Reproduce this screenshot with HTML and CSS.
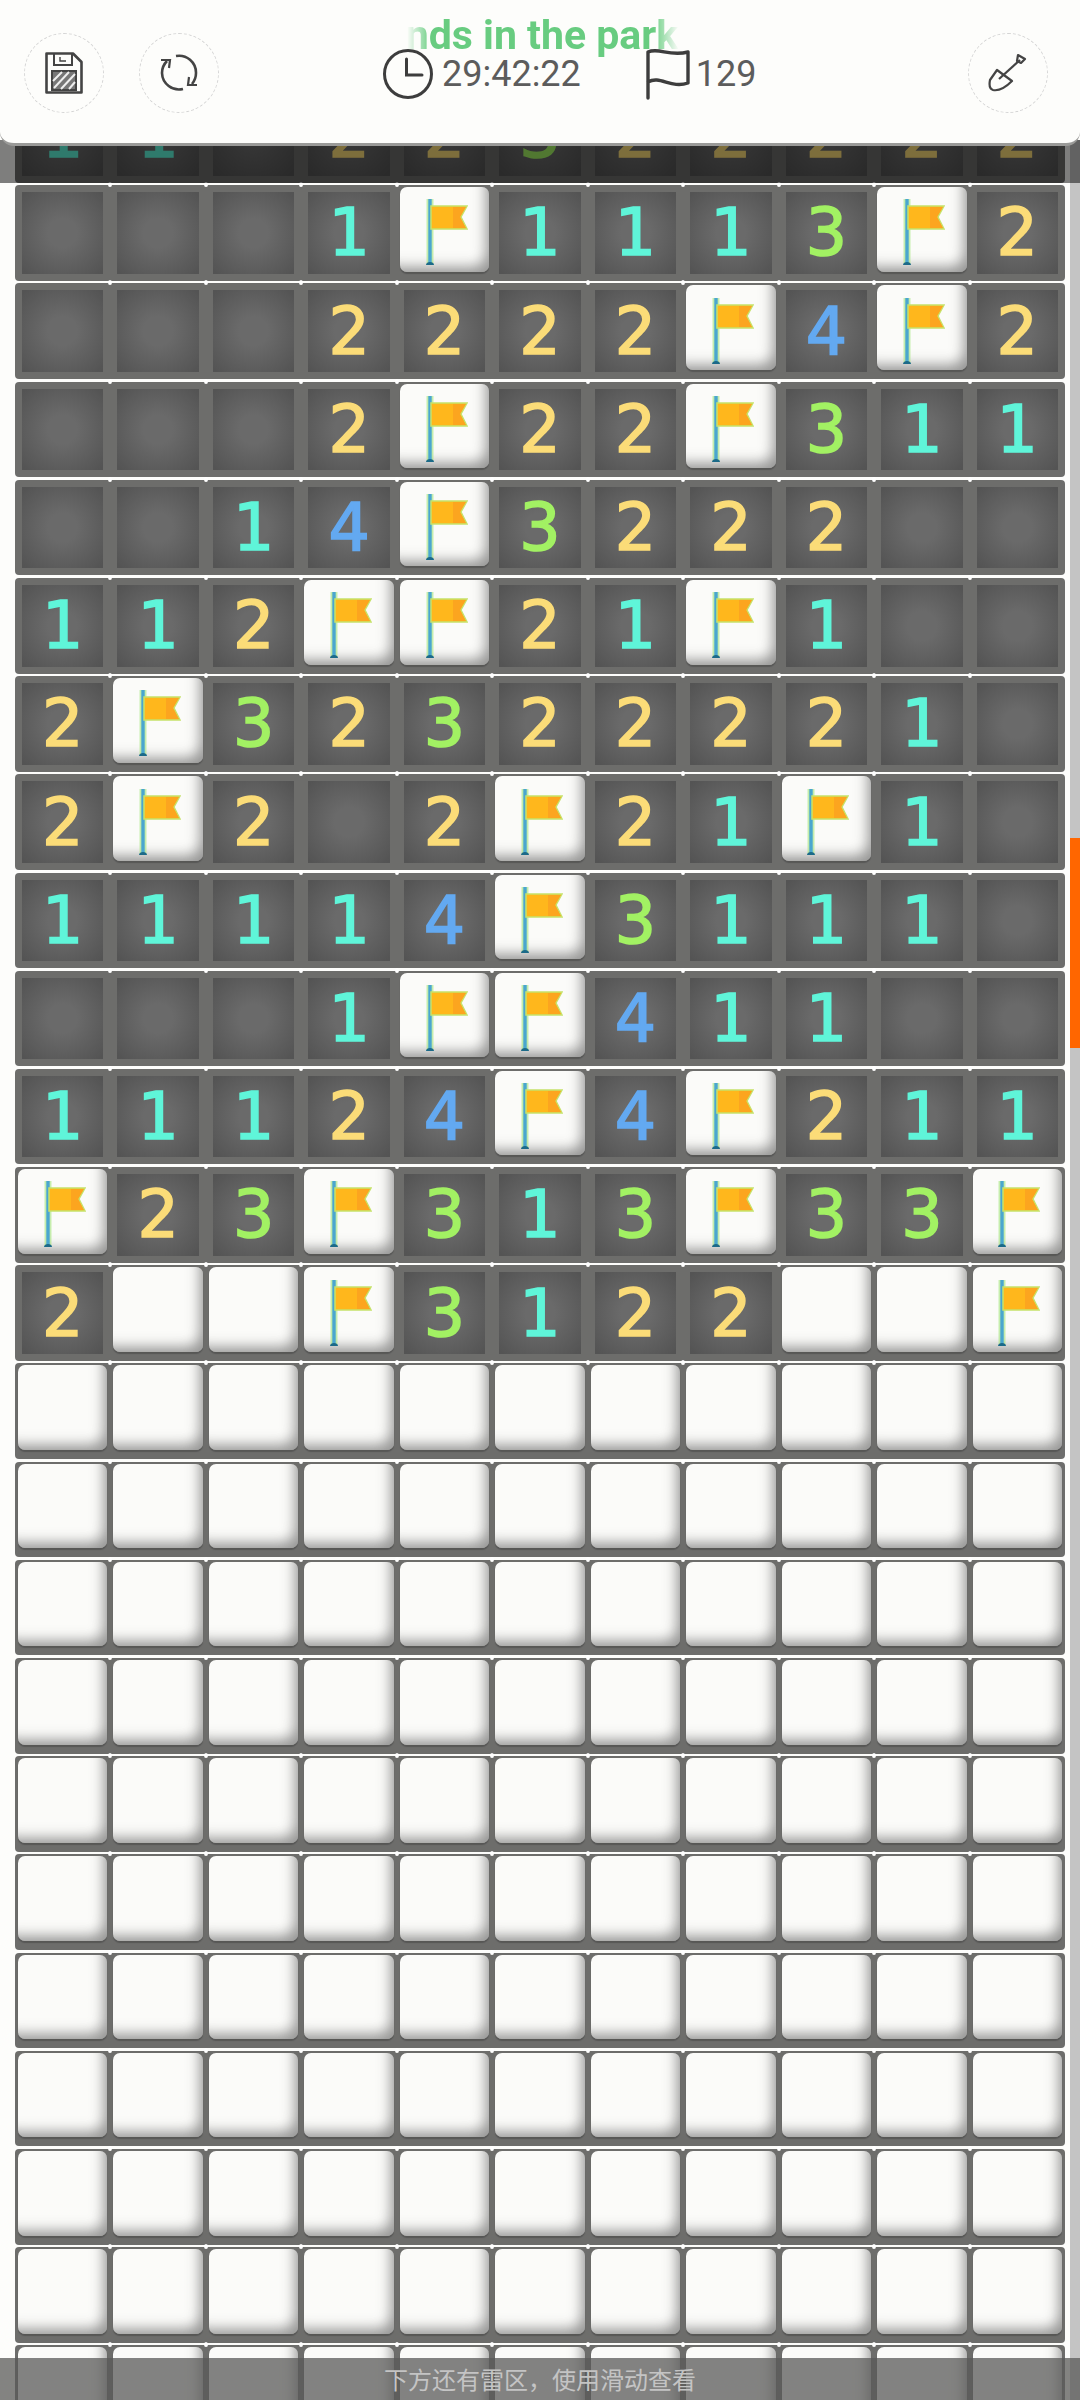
FILE: index.html
```html
<!DOCTYPE html>
<html lang="en">
<head>
    <meta charset="UTF-8">
    <meta name="viewport" content="width=device-width, initial-scale=1.0">
    <title>Minesweeper</title>
    <link rel="stylesheet" href="styles.css">
</head>
<body>
    <div id="game">
        <div id="board"></div>

        <div class="scroll-track"><div class="scroll-thumb"></div></div>
        <div class="header-dim"></div>

        <div id="header">
            <button class="round-btn save-btn">
                <svg width="38" height="42" viewBox="0 0 38 42" fill="none" stroke="#444" stroke-width="2.6">
                    <path d="M1.5 1.5H28L36.5 10V40.5H1.5Z" stroke-linejoin="round"/>
                    <path d="M9 1.5V13H27V1.5" stroke-width="2"/>
                    <path d="M15 5V9H21" stroke-width="1.4"/>
                    <rect x="7" y="19" width="24" height="19" fill="#777" stroke-width="2"/>
                    <path d="M8 29L17 20M9 36L24 20M16 37L30 22M24 37L30 30" stroke="#eee" stroke-width="2"/>
                </svg>
            </button>
            <button class="round-btn reload-btn">
                <svg width="38" height="38" viewBox="0 0 38 38" fill="none" stroke="#444" stroke-width="2.6">
                    <path d="M16 2A17 17 0 0 1 36 19A17 17 0 0 1 32 30"/>
                    <path d="M23 35A17 17 0 0 1 2 19A17 17 0 0 1 7 7"/>
                    <path d="M1 6H10L9 14" stroke-width="2.2"/>
                    <path d="M37 31H28L29 23" stroke-width="2.2"/>
                </svg>
            </button>
            <div class="status">
                <div class="song-title"><span>nds in the park</span></div>
                <div class="stats">
                    <svg width="52" height="52" viewBox="0 0 52 52" fill="none" stroke="#3d3d3d" stroke-width="3">
                        <circle cx="26" cy="26" r="23.5"/>
                        <path d="M24.5 11V27H40" stroke-linecap="round"/>
                    </svg>
                    <span class="time">29:42:22</span>
                    <svg class="flag-outline" width="46" height="52" viewBox="0 0 46 52" fill="none" stroke="#3d3d3d" stroke-width="3.4">
                        <path d="M3 50V4C14 -1 24 9 43 4V35C26 41 15 27 3 34" stroke-linecap="round" stroke-linejoin="round"/>
                    </svg>
                    <span class="flag-count">129</span>
                </div>
            </div>
            <button class="round-btn shovel-btn">
                <svg width="40" height="40" viewBox="0 0 40 40" fill="none" stroke="#444" stroke-width="2.2" stroke-linejoin="round">
                    <path d="M9 17L2 27C1 32 2 36 5 37C10 38 17 35 24 28Z"/>
                    <path d="M11 26L32 7"/>
                    <path d="M29 8L30 2L37 6L33 10Z"/>
                </svg>
            </button>
        </div>

        <div class="hint-bar">下方还有雷区&#65292;使用滑动查看</div>
    </div>

    <svg class="sprites" width="0" height="0">
        <symbol id="flag" viewBox="0 0 44 70">
            <path d="M6 2V67" stroke="#a4e47c" stroke-width="7" opacity="0.6"/>
            <path d="M6 2V66" stroke="#4aa6cf" stroke-width="3.4"/>
            <path d="M2 68C2 64 10 64 10 68Z" fill="#1c6a88"/>
            <path d="M7 9H43L37 20L43 32H7Z" fill="#ffb71c" stroke="#c6e26a" stroke-width="1.5"/>
            <path d="M29 10H42L36 20L42 31H29Z" fill="#fca51f"/>
        </symbol>
    </svg>

    <script src="board.js"></script>
</body>
</html>
```

FILE: styles.css
```css
* {
    box-sizing: border-box;
}
html, body {
    margin: 0;
    height: 100%;
}
body {
    background-color: #fdfdfb;
    overflow: hidden;
    font-family: "Roboto", "Noto Sans CJK SC", sans-serif;
}
#game {
    position: relative;
    width: 1080px;
    height: 2400px;
    overflow: hidden;
}

/* board */
#board {
    display: flex;
    flex-direction: column;
    gap: 2.6px;
    width: 1050px;
    margin-left: 15px;
    padding-top: 87px;
}
.row {
    display: grid;
    grid-template-columns: repeat(11, 1fr);
    height: 95.6px;
    flex-shrink: 0;
    background-color: #6d6d6b;
    border-radius: 4px;
}
.cell {
    position: relative;
    display: flex;
}
/* the small white spike where the row and column lines cross */
.cell + .cell::before {
    content: "";
    position: absolute;
    left: -2px;
    top: -3px;
    width: 4px;
    height: 5px;
    background-color: #fff;
    border-radius: 50%;
}
.open {
    flex: 1;
    display: flex;
    align-items: center;
    justify-content: center;
    margin: 7px;
    background: radial-gradient(circle, #6a6a6a 25%, #545454 95%);
    font-family: "DejaVu Sans", sans-serif;
    font-size: 65px;
    line-height: 1;
    -webkit-text-stroke: 1.6px currentColor;
}
.n1 { color: #5ff5d9; }
.n2 { color: #fbdc78; }
.n3 { color: #a2f163; }
.n4 { color: #63a9f1; }

.tile {
    flex: 1;
    display: flex;
    justify-content: center;
    align-items: center;
    margin: 2px 3px 9px 3px;
    background-color: #fbfbf9;
    border-radius: 7px;
    box-shadow: inset -10px -12px 13px -7px rgba(70, 70, 70, 0.55), 0 2px 1px rgba(60, 60, 60, 0.45);
}
.tile svg {
    width: 44px;
    height: 70px;
    margin-left: 2px;
    margin-top: 6px;
}

/* header */
#header {
    position: absolute;
    top: 0;
    left: 0;
    width: 1080px;
    height: 146px;
    display: flex;
    align-items: flex-start;
    padding: 33px 32px 0 24px;
    background-color: #fdfdfb;
    border-radius: 0 0 14px 14px;
    border-bottom: 3px solid #9a9a98;
}
.round-btn {
    flex-shrink: 0;
    display: flex;
    align-items: center;
    justify-content: center;
    width: 80px;
    height: 80px;
    padding: 0;
    background: none;
    border: 1.5px dashed #d4d4d4;
    border-radius: 50%;
}
.reload-btn {
    margin-left: 35px;
}
.shovel-btn {
    margin-left: auto;
}
.status {
    margin-left: 163px;
    margin-top: -33px;
}
.song-title {
    width: 274px;
    margin-left: 23px;
    overflow: hidden;
    white-space: nowrap;
    text-align: center;
    color: #68cc80;
    font-size: 41px;
    font-weight: 700;
    line-height: 70px;
    height: 70px;
    -webkit-mask-image: linear-gradient(to right, transparent 2px, #000 26px, #000 248px, transparent);
    mask-image: linear-gradient(to right, transparent 2px, #000 26px, #000 248px, transparent);
}
.stats {
    display: flex;
    align-items: flex-start;
    margin-top: -22px;
    color: #5c5c5c;
    font-size: 36px;
    line-height: 52px;
}
.time {
    margin-left: 8px;
}
.flag-outline {
    margin-left: 64px;
}
.flag-count {
    margin-left: 5px;
}

/* overlays */
.header-dim {
    position: absolute;
    top: 140px;
    left: 0;
    width: 1080px;
    height: 43px;
    background-color: rgba(0, 0, 0, 0.5);
}
.scroll-track {
    position: absolute;
    top: 140px;
    right: 0;
    width: 10px;
    height: 2260px;
    background-color: #c4c4c4;
}
.scroll-thumb {
    margin-top: 698px;
    height: 210px;
    background-color: #ff6600;
}
.hint-bar {
    position: absolute;
    left: 0;
    bottom: 0;
    width: 1080px;
    height: 42px;
    text-align: center;
    line-height: 46px;
    font-size: 24px;
    color: #c4c4c4;
    background-color: rgba(90, 90, 88, 0.75);
}
.sprites {
    position: absolute;
}
```

FILE: board.js
```js
// F = flag, # = still covered, . = open and empty
const rows = [
    '11.22322222',
    '...1F1113F2',
    '...2222F4F2',
    '...2F22F311',
    '..14F3222..',
    '112FF21F1..',
    '2F323222 21.',
    '2F2.2F21F1.',
    '11114F3111.',
    '...1FF411..',
    '11124F4F211',
    'F23F313F33F',
    '2##F3122##F'
];

for (let i = 0; i < 11; i++) {
    rows.push('###########');
}

const board = document.getElementById('board');

rows.forEach(function (row) {
    let rowEl = document.createElement('div');
    rowEl.className = 'row';

    for (let ch of row.replace(' ', '')) {
        let cell = document.createElement('div');
        cell.className = 'cell';

        if (ch === '#') {
            cell.innerHTML = '<div class="tile"></div>';
        } else if (ch === 'F') {
            cell.innerHTML = '<div class="tile"><svg><use href="#flag"/></svg></div>';
        } else if (ch === '.') {
            cell.innerHTML = '<div class="open"></div>';
        } else {
            cell.innerHTML = '<div class="open n' + ch + '">' + ch + '</div>';
        }
        rowEl.appendChild(cell);
    }
    board.appendChild(rowEl);
});
```
